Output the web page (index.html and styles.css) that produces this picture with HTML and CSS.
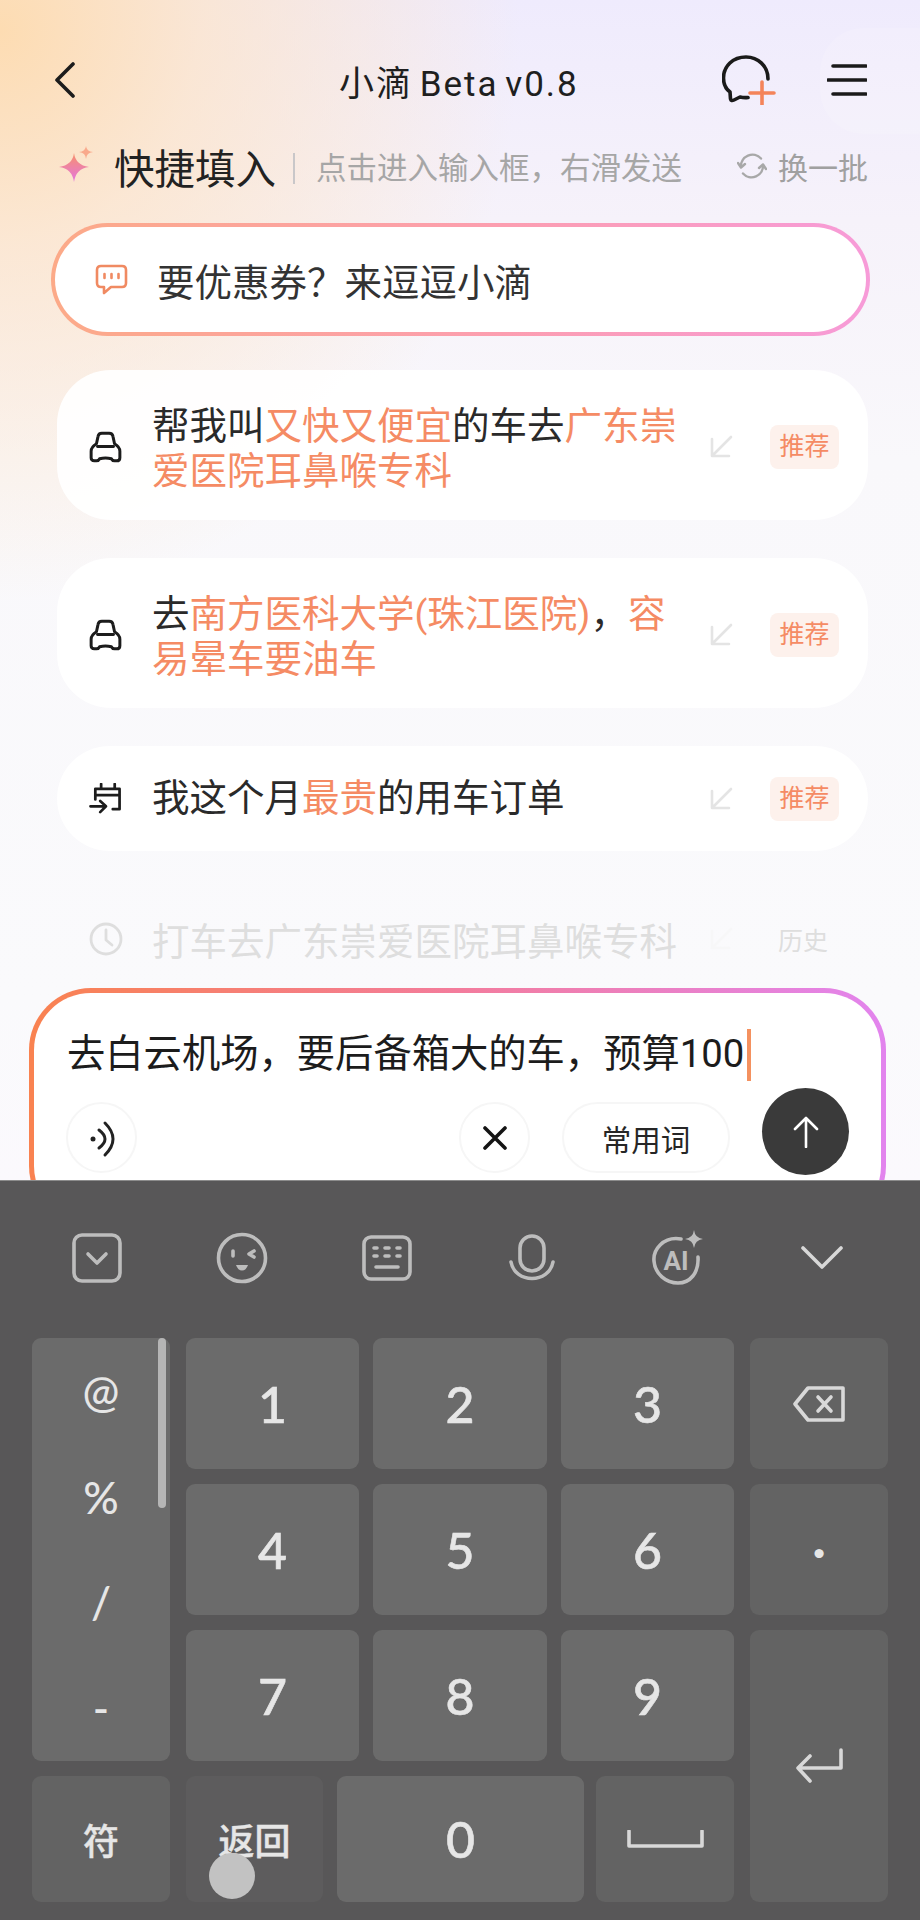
FILE: index.html
```html
<!DOCTYPE html>
<html lang="zh-CN">
<head>
    <meta charset="UTF-8">
    <meta name="viewport" content="width=device-width, initial-scale=1.0">
    <title>小滴 Beta v0.8</title>
    <link rel="stylesheet" href="styles.css">
</head>
<body>
<div class="page">
    <div class="corner-glow"></div>

    <header class="topbar">
        <svg class="back" viewBox="0 0 22 36"><path d="M19 2 L3 18 L19 34"/></svg>
        <div class="title">小滴 Beta v0.8</div>
        <div class="top-actions">
            <svg class="chat-plus" viewBox="0 0 54 50">
                <path class="ink" d="M46 24 C46 11 36 2 24 2 C11 2 1.5 11 1.5 23 C1.5 29 4 34 8 37 L8.5 44 Q9 46.5 12 45 L18 42 Q22 43 26 42.5"/>
                <path class="plus" d="M28 38 H52 M40 27 V50"/>
            </svg>
            <svg class="menu" viewBox="0 0 40 34"><path d="M6 3 H39 M1 17 H39 M6 31 H39"/></svg>
        </div>
    </header>

    <section class="quick">
        <svg class="sparkle" viewBox="0 0 36 36">
            <defs>
                <linearGradient id="starFill" x1="0" y1="0" x2="0" y2="1">
                    <stop offset="0" stop-color="#f7906a"/>
                    <stop offset="1" stop-color="#e476e0"/>
                </linearGradient>
            </defs>
            <path fill="url(#starFill)" d="M15 7 Q16.500 19 30 21 Q17 22.500 15 36 Q13 22.500 0 21 Q13.500 19 15 7Z"/>
            <path fill="#f9a98c" d="M27 0 Q27.500 5.500 34 6 Q27.500 6.500 27 13 Q26.500 6.500 20 6 Q26.500 5.500 27 0Z"/>
        </svg>
        <span class="quick-title">快捷填入</span>
        <span class="quick-line"></span>
        <span class="quick-hint">点击进入输入框，右滑发送</span>
        <span class="swap">
            <svg class="swap-icon" viewBox="0 0 30 28">
                <path d="M4 15 A11.500 11.500 0 0 1 24 6.500 M26 13 A11.500 11.500 0 0 1 6 21.500"/>
                <path d="M1 11 L4 15.500 L8 12 M29 17 L26 12.500 L22 16"/>
            </svg>
            换一批
        </span>
    </section>

    <div class="prompt-pill">
        <svg class="pill-icon" viewBox="0 0 33 31">
            <path d="M6 2 H27 Q31 2 31 6 V19 Q31 23 27 23 H16 L9 29 V23 H6 Q2 23 2 19 V6 Q2 2 6 2Z"/>
            <path d="M9.500 10 V14 M16.500 10 V14 M23.500 10 V14"/>
        </svg>
        <span>要优惠券？来逗逗小滴</span>
    </div>

    <div class="cards">
        <div class="card tall">
            <svg class="row-icon" viewBox="0 0 31 30">
                <path d="M7 12 L8.500 5 Q9 2 12 2 H19 Q22 2 22.500 5 L24 12 Q29 15 29 19 V25 Q29 28 26 28 H24 Q22 28 21 26 Q15.500 24.500 10 26 Q9 28 7 28 H5 Q2 28 2 25 V19 Q2 15 7 12Z"/>
                <path d="M8 14.500 H23"/>
            </svg>
            <p class="card-text">帮我叫<em>又快又便宜</em>的车去<em>广东崇爱医院耳鼻喉专科</em></p>
            <svg class="send-in" viewBox="0 0 24 24"><path d="M22 2 L4 20 M3 4 V21 H20"/></svg>
            <span class="tag">推荐</span>
        </div>
        <div class="card tall">
            <svg class="row-icon" viewBox="0 0 31 30">
                <path d="M7 12 L8.500 5 Q9 2 12 2 H19 Q22 2 22.500 5 L24 12 Q29 15 29 19 V25 Q29 28 26 28 H24 Q22 28 21 26 Q15.500 24.500 10 26 Q9 28 7 28 H5 Q2 28 2 25 V19 Q2 15 7 12Z"/>
                <path d="M8 14.500 H23"/>
            </svg>
            <p class="card-text">去<em>南方医科大学(珠江医院)</em>，<em>容易晕车要油车</em></p>
            <svg class="send-in" viewBox="0 0 24 24"><path d="M22 2 L4 20 M3 4 V21 H20"/></svg>
            <span class="tag">推荐</span>
        </div>
        <div class="card">
            <svg class="row-icon" viewBox="0 0 33 33">
                <path d="M6 17 V6 H31 V27 H24 M6 12.500 H31 M12 6 V1 M26 6 V1"/>
                <path d="M1 24 H16 M11 18.500 L17 24 L11 30"/>
            </svg>
            <p class="card-text">我这个月<em>最贵</em>的用车订单</p>
            <svg class="send-in" viewBox="0 0 24 24"><path d="M22 2 L4 20 M3 4 V21 H20"/></svg>
            <span class="tag">推荐</span>
        </div>
    </div>

    <div class="history">
        <svg class="clock" viewBox="0 0 34 34"><circle cx="17" cy="17" r="15"/><path d="M17 8 V18 L23 23"/></svg>
        <span class="history-text">打车去广东崇爱医院耳鼻喉专科</span>
        <svg class="send-in faint" viewBox="0 0 24 24"><path d="M22 2 L4 20 M3 4 V21 H20"/></svg>
        <span class="history-tag">历史</span>
    </div>

    <div class="composer-clip">
        <div class="composer">
            <div class="composer-text">去白云机场，要后备箱大的车，预算100<span class="caret"></span></div>
            <div class="composer-row">
                <button class="round-btn voice">
                    <svg viewBox="0 0 30 40" width="30" height="40">
                        <circle cx="6" cy="21" r="2.500"/>
                        <path d="M12 12 Q24 21 12 30 M18 5 Q34 21 18 37"/>
                    </svg>
                </button>
                <button class="round-btn clear">
                    <svg viewBox="0 0 26 24" width="26" height="24"><path d="M3 2 L23 22 M23 2 L3 22"/></svg>
                </button>
                <button class="phrase-btn">常用词</button>
                <button class="send-btn">
                    <svg viewBox="0 0 26 32" width="26" height="32"><path d="M13 31 V2 M2 13 L13 2 L24 13"/></svg>
                </button>
            </div>
        </div>
    </div>

    <div class="keyboard">
        <div class="kb-tools">
            <svg class="kb-icon" width="50" height="50" viewBox="0 0 50 50">
                <rect x="2" y="2" width="46" height="46" rx="8"/>
                <path d="M16 21 L25 30 L34 21"/>
            </svg>
            <svg class="kb-icon" width="52" height="52" viewBox="0 0 52 52">
                <circle cx="26" cy="26" r="23.500"/>
                <path d="M17 19 V24 M38 19 L33 22 L38 25"/>
                <path class="solid" d="M20 33 H32 Q30 38.500 26 38.500 Q22 38.500 20 33Z"/>
            </svg>
            <svg class="kb-icon" width="50" height="46" viewBox="0 0 50 46">
                <rect x="2" y="2" width="46" height="42" rx="7"/>
                <path d="M12 13 H15 M23 13 H27 M35 13 H38 M12 21 H15 M23 21 H27 M35 21 H38 M14 32 H36"/>
            </svg>
            <svg class="kb-icon" width="46" height="48" viewBox="0 0 46 48">
                <rect x="11" y="2" width="24" height="35" rx="12"/>
                <path d="M2 28 C6 50 40 50 44 28"/>
            </svg>
            <svg class="kb-icon" width="52" height="56" viewBox="0 0 52 56">
                <path d="M30 9 C12 6 2 20 3 31 C4 44 15 53 27 53 C39 53 48 43 47 27"/>
                <path class="solid" d="M43 0 Q44 8 52 9 Q44 10 43 18 Q42 10 34 9 Q42 8 43 0Z"/>
                <text class="ai-text" x="25" y="40" text-anchor="middle">AI</text>
            </svg>
            <svg class="kb-icon thin" width="42" height="26" viewBox="0 0 42 26"><path d="M2 3 L21 22 L40 3"/></svg>
        </div>

        <div class="kb-keys">
            <div class="key key-symbols trim">
                <span>@</span><span>%</span><span>/</span><span>-</span>
                <i class="kb-scroll"></i>
            </div>
            <div class="key digit">1</div>
            <div class="key digit">2</div>
            <div class="key digit trim">3</div>
            <div class="key func">
                <svg class="kb-icon thin" width="52" height="36" viewBox="0 0 52 36">
                    <path d="M15 2 H50 V34 H15 L2 18Z"/>
                    <path d="M25 11 L38 25 M38 11 L25 25"/>
                </svg>
            </div>
            <div class="key digit">4</div>
            <div class="key digit">5</div>
            <div class="key digit trim">6</div>
            <div class="key func symbol">·</div>
            <div class="key digit">7</div>
            <div class="key digit">8</div>
            <div class="key digit trim">9</div>
            <div class="key func key-enter">
                <svg class="kb-icon thin" width="48" height="36" viewBox="0 0 48 36">
                    <path d="M46 2 V20 H3 M15 8 L3 20 L15 33"/>
                </svg>
            </div>
            <div class="key func word trim">符</div>
            <div class="kb-bottom">
                <div class="key back-key word trim">返回<i class="touch-dot"></i></div>
                <div class="key digit zero">0</div>
                <div class="key func space">
                    <svg class="kb-icon thin" width="77" height="18" viewBox="0 0 77 18"><path d="M2 1 V16 H75 V1"/></svg>
                </div>
            </div>
        </div>
    </div>
</div>
</body>
</html>
```
FILE: styles.css
```css
* {
    box-sizing: border-box;
}

body {
    margin: 0;
    font-family: "Roboto", "Noto Sans CJK SC", sans-serif;
    color: #262626;
}

svg {
    display: block;
    flex: none;
    fill: none;
    stroke-linecap: round;
    stroke-linejoin: round;
}

.page {
    position: relative;
    width: 920px;
    height: 1920px;
    overflow: hidden;
    background:
        radial-gradient(ellipse 520px 570px at 0 30px, #fddcb2 0%, rgba(253, 228, 200, .75) 38%, rgba(252, 238, 232, 0) 100%),
        linear-gradient(180deg, #efebfd 0, #f6f2fa 220px, #f9f8fb 460px, #fafafc 1000px, #fbf9fd 1180px);
}

.corner-glow {
    position: absolute;
    top: 28px;
    left: 820px;
    width: 140px;
    height: 106px;
    border-radius: 44px;
    background: rgba(255, 255, 255, .15);
}

/* top bar */
.topbar {
    position: relative;
    display: grid;
    grid-template-columns: 285px auto 1fr;
    align-items: center;
    height: 120px;
    margin-top: 20px;
    padding: 0 53px 0 54px;
}

.back {
    width: 22px;
    height: 36px;
    stroke: #1c1c1c;
    stroke-width: 3.6;
}

.title {
    font-size: 35px;
    letter-spacing: 2px;
    word-spacing: -4px;
    white-space: nowrap;
    color: #1f1f1f;
}

.top-actions {
    display: flex;
    align-items: center;
    justify-self: end;
    gap: 51px;
}

.chat-plus {
    width: 54px;
    height: 50px;
}

.chat-plus .ink {
    stroke: #1a1a1a;
    stroke-width: 3.6;
}

.chat-plus .plus {
    stroke: #f4845a;
    stroke-width: 3.6;
}

.menu {
    width: 40px;
    height: 34px;
    stroke: #1a1a1a;
    stroke-width: 3.6;
}

/* quick fill */
.quick {
    position: relative;
    display: flex;
    align-items: center;
    height: 52px;
    padding: 0 52px 0 59px;
}

.sparkle {
    width: 36px;
    height: 36px;
    margin-top: -4px;
}

.quick-title {
    margin-left: 19px;
    font-size: 40.5px;
    color: #222;
}

.quick-line {
    width: 2px;
    height: 31px;
    margin: 4px 21px 0 17px;
    background: #c9c7c9;
}

.quick-hint {
    font-size: 30.5px;
    color: #a6a6a6;
}

.swap {
    display: flex;
    align-items: center;
    gap: 11px;
    margin-left: auto;
    font-size: 30px;
    color: #a0a0a0;
}

.swap-icon {
    width: 30px;
    height: 28px;
    stroke: #a8a8a8;
    stroke-width: 2.4;
}

/* prompt pill */
.prompt-pill {
    position: relative;
    display: flex;
    align-items: center;
    gap: 29px;
    height: 113px;
    margin: 31px 50px 0 51px;
    padding-left: 40px;
    border: 4px solid transparent;
    border-radius: 57px;
    background:
        linear-gradient(#fff, #fff) padding-box,
        linear-gradient(90deg, #fcaa88 0%, #fc9eb0 55%, #f79bd8 100%) border-box;
    font-size: 37.5px;
    color: #333;
}

.pill-icon {
    width: 33px;
    height: 31px;
    stroke: #f08a62;
    stroke-width: 2.6;
}

/* suggestion cards */
.cards {
    display: flex;
    flex-direction: column;
    gap: 38px;
    margin: 34px 52px 0 57px;
}

.card {
    display: flex;
    align-items: center;
    padding: 30px 29px 30px 32px;
    border-radius: 54px;
    background: rgba(255, 255, 255, .92);
}

.card.tall {
    padding-top: 32px;
    padding-bottom: 28px;
}

.row-icon {
    width: 33px;
    height: 32px;
    stroke: #1c1c1c;
    stroke-width: 2.8;
}

.card-text {
    width: 533px;
    margin: 0 0 0 30px;
    font-size: 37.5px;
    line-height: 45px;
    color: #2a2a2a;
}

.tall .card-text {
    margin-top: 2px;
    margin-bottom: -2px;
}

.card-text em {
    font-style: normal;
    color: #f58b64;
}

.send-in {
    width: 24px;
    height: 24px;
    margin-left: 25px;
    stroke: #e4e4e4;
    stroke-width: 2.6;
}

.send-in.faint {
    margin-left: 32px;
    stroke: #f7f7f8;
}

.tag {
    width: 69px;
    height: 44px;
    margin-left: 37px;
    border-radius: 8px;
    background: #fdf1ec;
    text-align: center;
    font-size: 25px;
    line-height: 44px;
    color: #f58b64;
}

/* faded history row */
.history {
    display: flex;
    align-items: center;
    height: 45px;
    margin-top: 65px;
    padding-left: 89px;
    color: #dedede;
}

.clock {
    width: 34px;
    height: 34px;
    stroke: #dedede;
    stroke-width: 2.8;
}

.history-text {
    margin-left: 29px;
    font-size: 37.5px;
}

.history-tag {
    margin-left: 45px;
    font-size: 25px;
}

/* composer, its bottom goes under the keyboard */
.composer-clip {
    height: 192px;
    margin-top: 27px;
    overflow: hidden;
}

.composer {
    height: 240px;
    margin: 0 34px 0 29px;
    padding: 38px 32px;
    border: 5px solid transparent;
    border-radius: 62px;
    background:
        linear-gradient(#fff, #fff) padding-box,
        linear-gradient(90deg, #f98250 0%, #f37c9c 50%, #e284ee 100%) border-box;
}

.composer-text {
    height: 45px;
    margin-left: 1px;
    font-size: 38.3px;
    line-height: 45px;
    white-space: nowrap;
    color: #1c1c1c;
}

.caret {
    display: inline-block;
    width: 4px;
    height: 52px;
    margin: -4px 0 0 3px;
    vertical-align: middle;
    background: #f4915f;
}

.composer-row {
    display: flex;
    align-items: flex-end;
    margin-top: 12px;
}

.composer-row button {
    display: flex;
    align-items: center;
    justify-content: center;
    padding: 0;
    font-family: inherit;
}

.round-btn {
    width: 71px;
    height: 71px;
    margin-bottom: 2px;
    border: 2px solid #f6f6f6;
    border-radius: 50%;
    background: #fff;
}

.voice svg {
    stroke: #222;
    stroke-width: 3;
}

.voice circle {
    fill: #222;
    stroke: none;
}

.clear {
    margin-left: auto;
}

.clear svg {
    stroke: #141414;
    stroke-width: 3.6;
}

.phrase-btn {
    width: 168px;
    height: 71px;
    margin: 0 32px 2px;
    border: 2px solid #f6f6f6;
    border-radius: 36px;
    background: #fff;
    font-size: 29.5px;
    color: #262626;
}

.send-btn {
    width: 87px;
    height: 87px;
    border: none;
    border-radius: 50%;
    background: #3a3a3a;
}

.send-btn svg {
    stroke: #fff;
    stroke-width: 2.6;
}

/* keyboard */
.keyboard {
    height: 740px;
    border-top: 1px solid #8c8c8c;
    background: #585758;
    color: #e6e6e6;
    font-family: "Lato", "Noto Sans CJK SC", sans-serif;
    font-weight: 500;
}

.kb-tools {
    display: grid;
    grid-template-columns: repeat(6, 145px);
    align-items: center;
    justify-items: center;
    height: 157px;
    padding: 0 0 3px 24px;
}

.kb-icon {
    stroke: #bdbdbd;
    stroke-width: 3.6;
}

.kb-icon.thin {
    stroke: #d8d8d8;
}

.kb-icon .solid {
    fill: #bdbdbd;
    stroke: none;
}

.ai-text {
    fill: #bdbdbd;
    stroke: none;
    font-family: "Roboto", sans-serif;
    font-size: 26px;
    font-weight: 700;
}

.kb-keys {
    display: grid;
    grid-template-columns: 140px 173px 174px 175px 138px;
    grid-template-rows: 131px 131px 131px 126px;
    gap: 15px 14px;
    padding-left: 32px;
}

.key {
    display: flex;
    align-items: center;
    justify-content: center;
    border-radius: 9px;
    background: #6b6b6b;
}

/* the gaps next to the outer columns are 2px wider */
.trim {
    margin-right: 2px;
}

.func {
    background: #636363;
}

.digit {
    font-size: 50px;
    -webkit-text-stroke: .6px #e6e6e6;
}

.symbol {
    font-size: 48px;
    font-weight: 700;
}

.word {
    font-size: 36px;
    -webkit-text-stroke: .4px #e6e6e6;
}

.key-symbols {
    position: relative;
    grid-row: span 3;
    flex-direction: column;
    align-items: stretch;
    font-size: 44px;
}

.key-symbols span {
    display: flex;
    flex: 1;
    align-items: center;
    justify-content: center;
}

.kb-scroll {
    position: absolute;
    top: 0;
    right: 4px;
    width: 8px;
    height: 170px;
    border-radius: 4px;
    background: #b5b5b5;
}

.key-enter {
    grid-row: span 2;
}

.kb-bottom {
    display: grid;
    grid-column: span 3;
    grid-template-columns: 139px 247px 138px;
    column-gap: 12px;
}

.back-key {
    position: relative;
    background: #5d5c5d;
}

.touch-dot {
    position: absolute;
    left: 23px;
    top: 77px;
    width: 46px;
    height: 46px;
    border-radius: 50%;
    background: #c2c2c2;
}
```
